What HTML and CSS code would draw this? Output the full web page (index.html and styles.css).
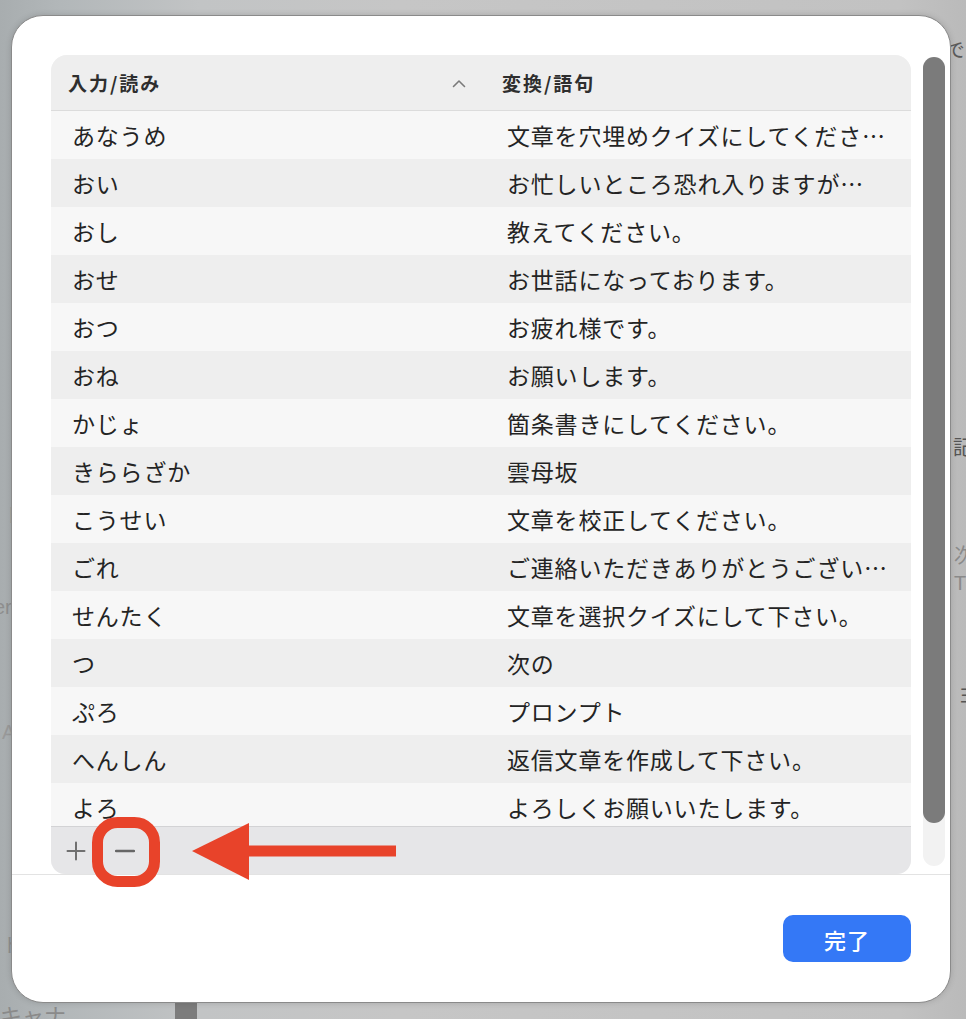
FILE: index.html
```html
<!DOCTYPE html>
<html lang="ja">
<head>
<meta charset="utf-8">
<title>ユーザ辞書</title>
<link rel="stylesheet" href="styles.css">
</head>
<body>
<div class="bg-layer">
  <span class="bgt bgt-de">で</span>
  <span class="bgt bgt-ki">記</span>
  <span class="bgt bgt-ji">次</span>
  <span class="bgt bgt-t">T</span>
  <span class="bgt bgt-yo">ヨ</span>
  <span class="bgt bgt-kyana">キャナ</span>
  <span class="bgt bgt-to">ト</span>
  <span class="bgt bgt-er">er</span>
  <span class="bgt bgt-a">A</span>
  <span class="bgt bgt-h">ト</span>
  <div class="bg-dark"></div>
</div>
<div class="stage">
  <div class="dialog">
    <div class="content">
      <div class="table">
        <div class="thead">
          <div class="th th-first">
            <span>入力/読み</span>
            <svg class="chev" width="14" height="9" viewBox="0 0 14 9"><polyline points="1.5,7.5 7,2 12.5,7.5" fill="none" stroke="#7a7a7a" stroke-width="1.6" stroke-linecap="round" stroke-linejoin="round"/></svg>
          </div>
          <div class="th th-second">変換/語句</div>
        </div>
        <div class="tbody">
          <div class="tr"><div class="td c1">あなうめ</div><div class="td c2">文章を穴埋めクイズにしてくださ…</div></div>
          <div class="tr"><div class="td c1">おい</div><div class="td c2">お忙しいところ恐れ入りますが…</div></div>
          <div class="tr"><div class="td c1">おし</div><div class="td c2">教えてください。</div></div>
          <div class="tr"><div class="td c1">おせ</div><div class="td c2">お世話になっております。</div></div>
          <div class="tr"><div class="td c1">おつ</div><div class="td c2">お疲れ様です。</div></div>
          <div class="tr"><div class="td c1">おね</div><div class="td c2">お願いします。</div></div>
          <div class="tr"><div class="td c1">かじょ</div><div class="td c2">箇条書きにしてください。</div></div>
          <div class="tr"><div class="td c1">きららざか</div><div class="td c2">雲母坂</div></div>
          <div class="tr"><div class="td c1">こうせい</div><div class="td c2">文章を校正してください。</div></div>
          <div class="tr"><div class="td c1">ごれ</div><div class="td c2">ご連絡いただきありがとうござい…</div></div>
          <div class="tr"><div class="td c1">せんたく</div><div class="td c2">文章を選択クイズにして下さい。</div></div>
          <div class="tr"><div class="td c1">つ</div><div class="td c2">次の</div></div>
          <div class="tr"><div class="td c1">ぷろ</div><div class="td c2">プロンプト</div></div>
          <div class="tr"><div class="td c1">へんしん</div><div class="td c2">返信文章を作成して下さい。</div></div>
          <div class="tr"><div class="td c1">よろ</div><div class="td c2">よろしくお願いいたします。</div></div>
        </div>
        <div class="toolbar">
          <div class="tbtn"><svg width="20" height="20" viewBox="0 0 20 20"><path d="M10 1.5V18.5M1.5 10H18.5" stroke="#707070" stroke-width="2" stroke-linecap="round"/></svg></div>
          <div class="tbtn"><svg width="20" height="20" viewBox="0 0 20 20"><path d="M1 10H19" stroke="#666666" stroke-width="2.4" stroke-linecap="round"/></svg></div>
        </div>
      </div>
      <div class="scrollbar"><div class="thumb"></div></div>
    </div>
    <div class="footer">
      <button class="done">完了</button>
    </div>
  </div>
</div>
<svg class="annot" width="966" height="1019" viewBox="0 0 966 1019">
  <rect x="97.5" y="822.5" width="57" height="59" rx="20" fill="none" stroke="#e8432a" stroke-width="11"/>
  <polygon points="192,851 249,823 249,880" fill="#e8432a"/>
  <rect x="244" y="845.5" width="152" height="11" fill="#e8432a"/>
</svg>
</body>
</html>
```

FILE: styles.css
```css
html, body {
  margin: 0;
  padding: 0;
}
body {
  width: 966px;
  height: 1019px;
  overflow: hidden;
  position: relative;
  font-family: "Noto Sans CJK JP", "Noto Sans", sans-serif;
  background: linear-gradient(90deg, #a8adaf 0px, #b2b7b9 60px, #c2c4c5 200px, #c6c6c6 400px, #c2c2c2 900px, #bababa 966px);
}
.bg-layer {
  position: absolute;
  inset: 0;
  pointer-events: none;
}
.bgt {
  position: absolute;
  font-size: 20px;
  color: #7d7d7d;
  line-height: 1;
}
.bgt-de { left: 945px; top: 40px; color: #5a5a5a; transform: rotate(-12deg); }
.bgt-ki { left: 953px; top: 437px; color: #555; }
.bgt-ji { left: 954px; top: 545px; color: #8a8a8a; }
.bgt-t { left: 954px; top: 573px; color: #8a8a8a; font-family: "Liberation Sans", sans-serif; }
.bgt-yo { left: 958px; top: 685px; color: #555; }
.bgt-kyana { left: 0px; top: 1003px; color: #8a8a8a; font-size: 22px; }
.bgt-to { left: 2px; top: 935px; color: #8e8e8e; }
.bgt-er { left: -6px; top: 597px; color: #8e8e8e; font-family: "Liberation Sans", sans-serif; }
.bgt-a { left: 2px; top: 722px; color: #999; font-family: "Liberation Sans", sans-serif; }
.bgt-h { left: 4px; top: 505px; color: #999; }
.bg-dark {
  position: absolute;
  left: 175px;
  top: 1003px;
  width: 22px;
  height: 16px;
  background: #7c7c7c;
}

.stage {
  position: relative;
  padding: 15px 0 0 11px;
}
.dialog {
  width: 940px;
  height: 988px;
  box-sizing: border-box;
  background: #ffffff;
  border: 1px solid #8a8a8a;
  border-radius: 32px;
  display: flex;
  flex-direction: column;
  overflow: hidden;
  box-shadow: 0 0 6px rgba(0,0,0,0.15);
}
.content {
  flex: 1;
  display: flex;
  align-items: flex-start;
  padding: 39px 5px 0 39px;
}
.table {
  width: 860px;
  height: 819px;
  display: flex;
  flex-direction: column;
  border-radius: 16px 16px 14px 14px;
  overflow: hidden;
  background: #f6f6f6;
}
.thead {
  height: 55px;
  flex: none;
  display: grid;
  grid-template-columns: 434px 1fr;
  background: #eeeeee;
  border-bottom: 1px solid #dcdcdc;
}
.th {
  display: flex;
  align-items: center;
  font-size: 19px;
  font-weight: 600;
  color: #2e2e2e;
  letter-spacing: 2px;
}
.th-first {
  padding-left: 17px;
  padding-right: 19px;
  justify-content: space-between;
}
.th-second {
  padding-left: 17px;
}
.chev {
  margin-top: 1px;
}
.tbody {
  height: 715px;
  flex: none;
  overflow: hidden;
}
.tr {
  height: 48px;
  display: grid;
  grid-template-columns: 434px 1fr;
  align-items: center;
  background: #f7f7f7;
}
.tr:nth-child(even) {
  background: #eeeeee;
}
.td {
  font-size: 23px;
  color: #242424;
  letter-spacing: 0.8px;
  white-space: nowrap;
  overflow: hidden;
  text-overflow: ellipsis;
  line-height: 48px;
}
.c1 { padding-left: 21px; }
.c2 { padding-left: 22px; padding-right: 18px; }
.toolbar {
  flex: 1;
  display: flex;
  align-items: center;
  gap: 19px;
  padding-left: 10px;
  background: #e6e6e8;
  border-top: 1px solid #d3d3d5;
}
.tbtn {
  width: 30px;
  height: 30px;
  display: flex;
  align-items: center;
  justify-content: center;
}
.scrollbar {
  margin-left: 12px;
  margin-top: 2px;
  width: 22px;
  height: 809px;
  border-radius: 11px;
  background: #f2f2f2;
  flex: none;
}
.thumb {
  height: 766px;
  border-radius: 11px;
  background: #7b7b7b;
}
.footer {
  flex: none;
  height: 128px;
  box-sizing: border-box;
  border-top: 1px solid #e3e3e3;
  padding: 40px 39px 0 0;
  display: flex;
  justify-content: flex-end;
  align-items: flex-start;
}
.done {
  width: 128px;
  height: 47px;
  border: none;
  border-radius: 10px;
  background: #3478f6;
  color: #ffffff;
  font-family: "Noto Sans CJK JP", "Noto Sans", sans-serif;
  font-size: 22px;
  font-weight: 500;
  letter-spacing: 1px;
  padding: 0;
}
.annot {
  position: absolute;
  left: 0;
  top: 0;
  pointer-events: none;
}
```
